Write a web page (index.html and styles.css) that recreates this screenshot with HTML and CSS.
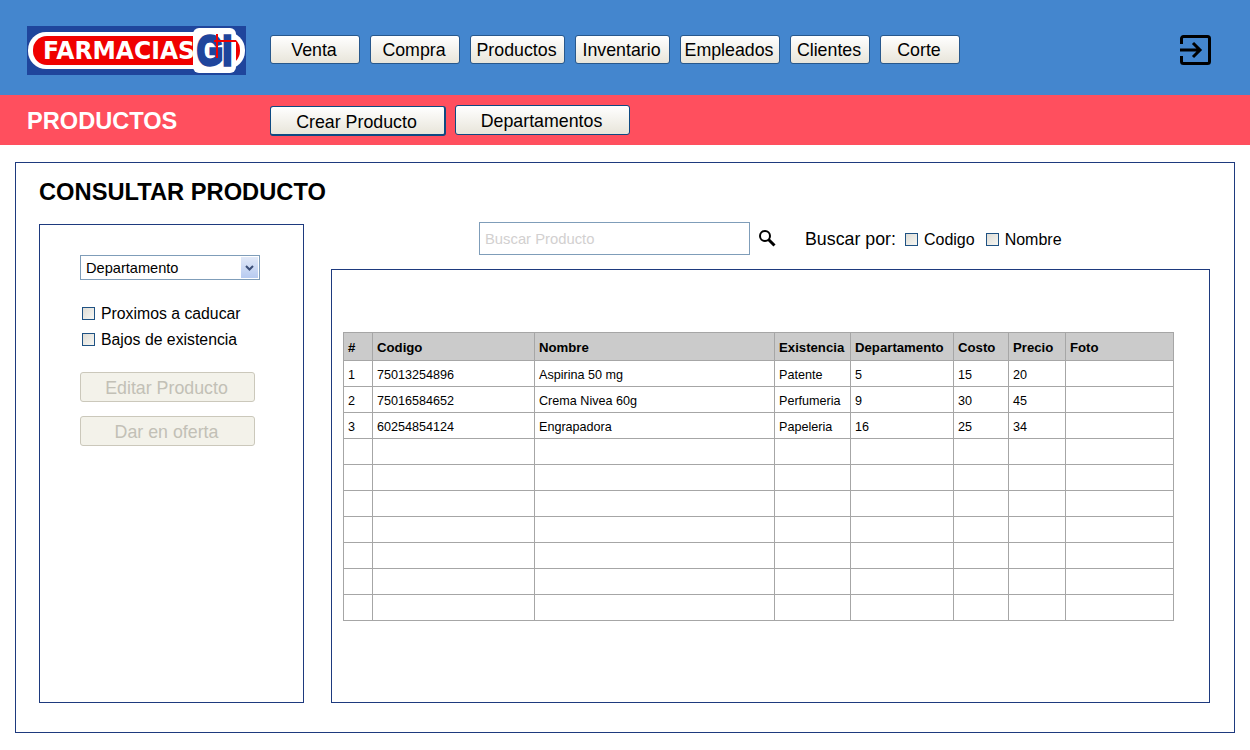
FILE: index.html
```html
<!DOCTYPE HTML>
<HTML>
<HEAD>
<META CHARSET="utf-8">
<TITLE>Farmacias GI - Productos</TITLE>
<link rel="stylesheet" href="styles.css">
</HEAD>
<BODY>
<!-- top bar -->
<DIV CLASS="TOPBAR">
  <svg class="LOGO" width="219" height="49" viewBox="0 0 219 49">
    <rect width="219" height="49" fill="#1f459c"/>
    <rect x="1" y="6" width="217" height="37" rx="18" fill="#fff"/>
    <rect x="6" y="10" width="207" height="29" rx="14" fill="#f00000"/>
    <text class="LOGOTEXT" x="16" y="33" textLength="152" lengthAdjust="spacingAndGlyphs">FARMACIAS</text>
    <rect x="166" y="2" width="43" height="45" rx="6" fill="#fff"/>
    <text class="LOGOMARK" x="170" y="39" textLength="35" lengthAdjust="spacingAndGlyphs">GI</text>
    <rect x="187" y="14" width="22" height="2" fill="#f00000"/>
    <rect x="189" y="8" width="2" height="24" fill="#f00000"/>
  </svg>
  <DIV CLASS="NAV">
    <A CLASS="BTN W90">Venta</A>
    <A CLASS="BTN W90">Compra</A>
    <A CLASS="BTN W95">Productos</A>
    <A CLASS="BTN W95">Inventario</A>
    <A CLASS="BTN W100">Empleados</A>
    <A CLASS="BTN W80">Clientes</A>
    <A CLASS="BTN W80">Corte</A>
  </DIV>
  <svg class="LOGOUT" width="31" height="30" viewBox="0 0 31 30" fill="none" stroke="#000" stroke-width="3">
    <path d="M1.5 9V3.5a2 2 0 0 1 2-2h24a2 2 0 0 1 2 2v23a2 2 0 0 1-2 2h-24a2 2 0 0 1-2-2V21"/>
    <path d="M0 15h20M13 8l7 7-7 7"/>
  </svg>
</DIV>

<!-- section bar -->
<DIV CLASS="SECTION">
  <SPAN CLASS="SECTIONTITLE">PRODUCTOS</SPAN>
  <A CLASS="BTN SUBBTN ACTIVE">Crear Producto</A>
  <A CLASS="BTN SUBBTN">Departamentos</A>
</DIV>

<DIV CLASS="MAIN">
  <H1>CONSULTAR PRODUCTO</H1>
  <DIV CLASS="COLUMNS">

    <DIV CLASS="FILTERS">
      <DIV CLASS="DROPDOWN">
        <SPAN>Departamento</SPAN>
        <SPAN CLASS="DROPARROW">
          <svg width="9" height="6" viewBox="0 0 9 6" fill="none" stroke="#3c4f78" stroke-width="2"><path d="M1 1l3.5 3.5L8 1"/></svg>
        </SPAN>
      </DIV>
      <LABEL CLASS="CHECK FIRST"><SPAN CLASS="BOX"></SPAN>Proximos a caducar</LABEL>
      <LABEL CLASS="CHECK"><SPAN CLASS="BOX"></SPAN>Bajos de existencia</LABEL>
      <A CLASS="DISABLED FIRST">Editar Producto</A>
      <A CLASS="DISABLED">Dar en oferta</A>
    </DIV>

    <DIV CLASS="RESULTS">
      <DIV CLASS="SEARCH">
        <DIV CLASS="SEARCHBOX">Buscar Producto</DIV>
        <svg class="LENS" width="18" height="18" viewBox="0 0 18 18" fill="none" stroke="#000">
          <circle cx="7" cy="7" r="5" stroke-width="2"/>
          <path d="M10.5 10.5l6 6" stroke-width="3"/>
        </svg>
        <SPAN CLASS="SEARCHBY">Buscar por:</SPAN>
        <LABEL CLASS="CHECK SMALL"><SPAN CLASS="BOX"></SPAN>Codigo</LABEL>
        <LABEL CLASS="CHECK SMALL"><SPAN CLASS="BOX"></SPAN>Nombre</LABEL>
      </DIV>
      <DIV CLASS="TABLEBOX">
        <TABLE>
          <COLGROUP>
            <COL CLASS="C1"><COL CLASS="C2"><COL CLASS="C3"><COL CLASS="C4">
            <COL CLASS="C5"><COL CLASS="C6"><COL CLASS="C7"><COL CLASS="C8">
          </COLGROUP>
          <TR><TH>#</TH><TH>Codigo</TH><TH>Nombre</TH><TH>Existencia</TH><TH>Departamento</TH><TH>Costo</TH><TH>Precio</TH><TH>Foto</TH></TR>
          <TR><TD>1</TD><TD>75013254896</TD><TD>Aspirina 50 mg</TD><TD>Patente</TD><TD>5</TD><TD>15</TD><TD>20</TD><TD></TD></TR>
          <TR><TD>2</TD><TD>75016584652</TD><TD>Crema Nivea 60g</TD><TD>Perfumeria</TD><TD>9</TD><TD>30</TD><TD>45</TD><TD></TD></TR>
          <TR><TD>3</TD><TD>60254854124</TD><TD>Engrapadora</TD><TD>Papeleria</TD><TD>16</TD><TD>25</TD><TD>34</TD><TD></TD></TR>
          <TR><TD></TD><TD></TD><TD></TD><TD></TD><TD></TD><TD></TD><TD></TD><TD></TD></TR>
          <TR><TD></TD><TD></TD><TD></TD><TD></TD><TD></TD><TD></TD><TD></TD><TD></TD></TR>
          <TR><TD></TD><TD></TD><TD></TD><TD></TD><TD></TD><TD></TD><TD></TD><TD></TD></TR>
          <TR><TD></TD><TD></TD><TD></TD><TD></TD><TD></TD><TD></TD><TD></TD><TD></TD></TR>
          <TR><TD></TD><TD></TD><TD></TD><TD></TD><TD></TD><TD></TD><TD></TD><TD></TD></TR>
          <TR><TD></TD><TD></TD><TD></TD><TD></TD><TD></TD><TD></TD><TD></TD><TD></TD></TR>
          <TR><TD></TD><TD></TD><TD></TD><TD></TD><TD></TD><TD></TD><TD></TD><TD></TD></TR>
        </TABLE>
      </DIV>
    </DIV>

  </DIV>
</DIV>
</BODY>
</HTML>
```

FILE: styles.css
```css
BODY {
	margin		: 0;
	background-color: white;
	font-family	: "Liberation Sans",arial,sans-serif;
	color		: black;
}
/* top bar */
.TOPBAR {
	display		: flex;
	align-items	: center;
	height		: 95px;
	padding		: 4px 39px 0 27px;
	box-sizing	: border-box;
	background-color: #4486ce;
}
.LOGO {
	flex		: none;
	margin		: 1px 24px 0 0;
}
.LOGOTEXT {
	font-family	: "DejaVu Sans",sans-serif;
	font-weight	: bold;
	font-size	: 24px;
	fill		: white;
}
.LOGOMARK {
	font-family	: "Liberation Sans",sans-serif;
	font-weight	: bold;
	font-size	: 42px;
	fill		: #1f459c;
	stroke		: #1f459c;
	stroke-width	: 3.5px;
}
.NAV {
	display		: flex;
	gap		: 10px;
	margin-top	: -1px;
}
.LOGOUT {
	margin-left	: auto;
}
.BTN {
	display		: block;
	height		: 29px;
	line-height	: 29px;
	padding-right	: 2px;
	box-sizing	: border-box;
	border		: 1px solid #28588c;
	border-radius	: 3px;
	background	: linear-gradient(#ffffff,#e8e5da);
	text-align	: center;
	font-size	: 17.8px;
}
.W80 {	width		: 80px; }
.W90 {	width		: 90px; }
.W95 {	width		: 95px; }
.W100 {	width		: 100px; }
/* section bar */
.SECTION {
	display		: flex;
	align-items	: flex-start;
	height		: 50px;
	padding		: 10px 0 0 27px;
	box-sizing	: border-box;
	background-color: #ff4f5e;
}
.SECTIONTITLE {
	width		: 243px;
	margin-top	: 1px;
	font-size	: 23.6px;
	line-height	: 30px;
	font-weight	: bold;
	color		: white;
}
.SUBBTN {
	width		: 175px;
	height		: 30px;
	line-height	: 30px;
	border-color	: #0e4a82;
	margin-left	: 9px;
}
.SUBBTN.ACTIVE {
	width		: 176px;
	margin		: 1px 0 0 0;
	border-width	: 1px 2px 2px 1px;
}
/* content */
.MAIN {
	height		: 571px;
	margin		: 17px 15px 0;
	padding-left	: 23px;
	box-sizing	: border-box;
	border		: 1px solid #1e3a7e;
}
H1 {
	height		: 58px;
	margin		: 0;
	padding-top	: 16px;
	box-sizing	: border-box;
	font-size	: 23.7px;
	line-height	: 27px;
}
.COLUMNS {
	display		: flex;
	gap		: 27px;
}
.FILTERS {
	width		: 265px;
	height		: 479px;
	margin-top	: 3px;
	padding		: 30px 0 0 40px;
	box-sizing	: border-box;
	border		: 1px solid #1e3a7e;
}
.DROPDOWN {
	display		: flex;
	align-items	: center;
	justify-content	: space-between;
	width		: 180px;
	height		: 25px;
	padding		: 0 1px 0 5px;
	box-sizing	: border-box;
	border		: 1px solid #7f9db9;
	font-size	: 14.6px;
}
.DROPARROW {
	display		: flex;
	align-items	: center;
	justify-content	: center;
	width		: 17px;
	height		: 21px;
	background	: linear-gradient(#e1e9f8,#b7caf0);
}
.CHECK {
	display		: flex;
	align-items	: center;
	height		: 26px;
	padding-left	: 2px;
	font-size	: 15.8px;
}
.CHECK.FIRST {
	margin-top	: 21px;
}
.BOX {
	width		: 13px;
	height		: 13px;
	margin		: 0 6px 2px 0;
	box-sizing	: border-box;
	border		: 1px solid #1f5283;
	background	: linear-gradient(135deg,#dfddd6,#f6f6f2);
}
.DISABLED {
	display		: block;
	width		: 175px;
	height		: 30px;
	margin-top	: 14px;
	padding-right	: 2px;
	box-sizing	: border-box;
	border		: 1px solid #cbc8bb;
	border-radius	: 3px;
	background-color: #f3f2ea;
	text-align	: center;
	font-size	: 17.8px;
	line-height	: 30px;
	color		: #c2c0b6;
}
.DISABLED.FIRST {
	margin-top	: 19px;
}
.RESULTS {
	width		: 879px;
}
.SEARCH {
	display		: flex;
	align-items	: center;
	height		: 48px;
	padding		: 0 0 13px 148px;
	box-sizing	: border-box;
}
.SEARCHBOX {
	width		: 271px;
	height		: 33px;
	padding-left	: 5px;
	box-sizing	: border-box;
	border		: 1px solid #7f9db9;
	font-size	: 14.8px;
	line-height	: 32px;
	color		: #d2d0d0;
}
.LENS {
	margin		: -2px 29px 0 8px;
}
.SEARCHBY {
	font-size	: 17.8px;
	line-height	: 22px;
	margin		: 1px 7px 0 0;
}
.CHECK.SMALL {
	font-size	: 16px;
	margin		: 2px 9px 0 0;
}
.SMALL .BOX {
	margin-bottom	: 0;
}
.TABLEBOX {
	height		: 434px;
	padding		: 62px 0 0 11px;
	box-sizing	: border-box;
	border		: 1px solid #1e3a7e;
}
TABLE {
	width		: 831px;
	table-layout	: fixed;
	border-collapse	: collapse;
	font-size	: 12.6px;
}
.C1 {	width		: 29px; }
.C2 {	width		: 162px; }
.C3 {	width		: 240px; }
.C4 {	width		: 76px; }
.C5 {	width		: 103px; }
.C6 {	width		: 55px; }
.C7 {	width		: 57px; }
.C8 {	width		: 108px; }
TH,TD {
	height		: 25px;
	padding		: 2px 0 0 4px;
	box-sizing	: border-box;
	border		: 1px solid #a6a6a6;
	text-align	: left;
	white-space	: nowrap;
	overflow	: hidden;
}
TH {
	height		: 28px;
	padding-top	: 1px;
	background-color: #cbcbcb;
	font-size	: 13.2px;
}
TD {
	height		: 26px;
}
```
